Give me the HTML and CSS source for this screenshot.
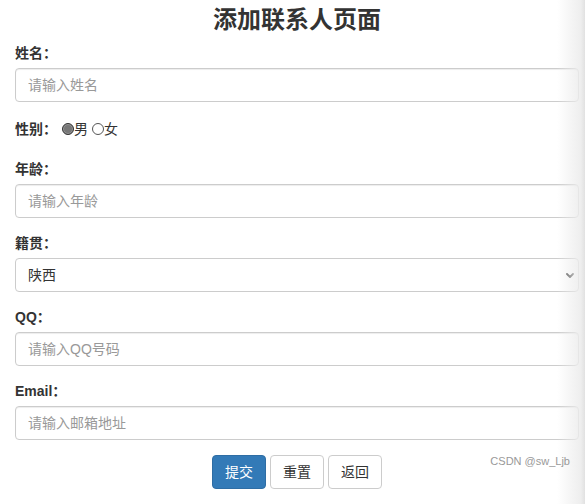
FILE: index.html
```html
<!DOCTYPE html>
<html lang="zh-CN">
<head>
<meta charset="utf-8">
<title>添加联系人页面</title>
<link rel="stylesheet" href="styles.css">
</head>
<body>
<div class="container">
  <h3 class="title">添加联系人页面</h3>
  <form class="form">
    <div class="form-group">
      <label class="label">姓名：</label>
      <input class="form-control" type="text" placeholder="请输入姓名">
    </div>
    <div class="form-group gender">
      <label class="label">性别：</label>
      <label class="radio-label"><input class="radio" type="radio" name="sex" checked>男</label>
      <label class="radio-label"><input class="radio" type="radio" name="sex">女</label>
    </div>
    <div class="form-group">
      <label class="label">年龄：</label>
      <input class="form-control" type="text" placeholder="请输入年龄">
    </div>
    <div class="form-group">
      <label class="label">籍贯：</label>
      <div class="select-wrap">
        <select class="form-control select">
          <option>陕西</option>
          <option>北京</option>
          <option>上海</option>
        </select>
        <svg class="chevron" viewBox="0 0 8 5" width="8" height="5"><path d="M1 1 L4 4 L7 1" fill="none" stroke="#444" stroke-width="1.8" stroke-linecap="round" stroke-linejoin="round"/></svg>
      </div>
    </div>
    <div class="form-group">
      <label class="label">QQ：</label>
      <input class="form-control" type="text" placeholder="请输入QQ号码">
    </div>
    <div class="form-group">
      <label class="label">Email：</label>
      <input class="form-control" type="text" placeholder="请输入邮箱地址">
    </div>
    <div class="actions">
      <button type="button" class="btn btn-primary">提交</button>
      <button type="button" class="btn btn-default">重置</button>
      <button type="button" class="btn btn-default">返回</button>
    </div>
  </form>
</div>
<div class="edge-shade"></div>
<div class="watermark">CSDN @sw_Ljb</div>
</body>
</html>
```
FILE: styles.css
```css
* { box-sizing: border-box; }
html, body { margin: 0; padding: 0; background: #fff; }
body {
  font-family: "Liberation Sans", Arial, "Noto Sans CJK SC", sans-serif;
  font-size: 14px;
  line-height: 20px;
  color: #333;
  overflow: hidden;
}
.container { padding: 0 6px 0 15px; }
.title {
  margin: 7px 0 10px;
  font-size: 24px;
  line-height: 26px;
  font-weight: 700;
  text-align: center;
  color: #333;
}
.form-group { margin-bottom: 15px; }
.label {
  display: block;
  font-weight: 700;
  margin-bottom: 5px;
  height: 20px;
}
.form-control {
  display: block;
  width: 100%;
  height: 34px;
  padding: 6px 12px;
  font: inherit;
  font-size: 14px;
  color: #555;
  background: #fff;
  border: 1px solid #ccc;
  border-radius: 4px;
  box-shadow: inset 0 1px 1px rgba(0,0,0,.075);
  outline: none;
}
.form-control::placeholder { color: #999; }
.select-wrap { position: relative; }
.select {
  -webkit-appearance: none;
  appearance: none;
  color: #333;
  box-shadow: none;
}
.chevron { position: absolute; right: 5px; top: 15px; }
.gender {
  display: flex;
  align-items: center;
  height: 27px;
  padding-bottom: 3px;
}
.gender .label { display: inline-block; margin: 0 5px 0 0; }
.radio-label { display: inline-flex; align-items: center; margin-right: 4px; }
.radio {
  -webkit-appearance: none;
  appearance: none;
  width: 12px;
  height: 12px;
  margin: 0 0 0 0;
  border: 1px solid #555;
  border-radius: 50%;
  background: #fff;
}
.radio:checked { background: #777; border-color: #333; box-shadow: inset 0 0 0 1px #999; }
.actions { display: flex; justify-content: center; gap: 4px; }
.btn {
  height: 34px;
  padding: 6px 12px;
  font: inherit;
  font-size: 14px;
  border-radius: 4px;
  border: 1px solid #ccc;
  background: #fff;
  color: #333;
}
.btn-primary { background: #337ab7; border-color: #2e6da4; color: #fff; }
.edge-shade {
  position: absolute;
  top: 0; right: 0;
  width: 28px; height: 504px;
  background: linear-gradient(to right, rgba(240,240,240,0), rgba(236,236,236,.9) 85%, rgba(225,225,225,1));
  pointer-events: none;
}
.watermark {
  position: absolute;
  right: 15px;
  top: 451px;
  font-size: 11px;
  color: #999;
  font-family: "Liberation Sans", Arial, sans-serif;
}
```
